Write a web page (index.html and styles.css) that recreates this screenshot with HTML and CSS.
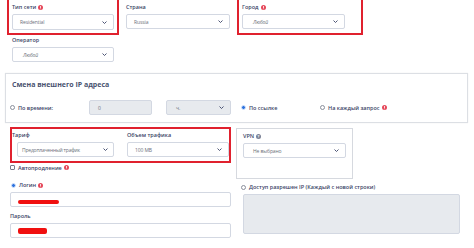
FILE: index.html
```html
<!DOCTYPE html>
<html>
<head>
    <link rel="stylesheet" href="styles.css">
    <title>Прокси</title>
</head>
<body>
<div class="top">
    <div class="group marked">
        <div class="label">Тип сети <svg class="warn" viewBox="0 0 10 10"><circle cx="5" cy="5" r="5"/><rect x="4.2" y="2" width="1.6" height="4"/><rect x="4.2" y="7" width="1.6" height="1.4"/></svg></div>
        <div class="select tall"><span>Residential</span><svg class="chev" viewBox="0 0 10 6"><path d="M1 1l4 4 4-4"/></svg></div>
    </div>
    <div class="group">
        <div class="label">Страна</div>
        <div class="select"><span>Russia</span><svg class="chev" viewBox="0 0 10 6"><path d="M1 1l4 4 4-4"/></svg></div>
    </div>
    <div class="group city">
        <div class="label">Город <svg class="warn" viewBox="0 0 10 10"><circle cx="5" cy="5" r="5"/><rect x="4.2" y="2" width="1.6" height="4"/><rect x="4.2" y="7" width="1.6" height="1.4"/></svg></div>
        <div class="select"><span class="any">Любой</span><svg class="chev" viewBox="0 0 10 6"><path d="M1 1l4 4 4-4"/></svg></div>
    </div>
</div>

<div class="group operator">
    <div class="label">Оператор</div>
    <div class="select"><span class="any">Любой</span><svg class="chev" viewBox="0 0 10 6"><path d="M1 1l4 4 4-4"/></svg></div>
</div>

<div class="ipbox">
    <div class="title">Смена внешнего IP адреса</div>
    <div class="iprow">
        <div class="opt time"><i class="radio"></i>По времени:</div>
        <div class="input off">0</div>
        <div class="select off unit"><span>ч.</span><svg class="chev" viewBox="0 0 10 6"><path d="M1 1l4 4 4-4"/></svg></div>
        <div class="opt link"><i class="radio on"></i>По ссылке</div>
        <div class="opt"><i class="radio"></i>На каждый запрос <svg class="warn" viewBox="0 0 10 10"><circle cx="5" cy="5" r="5"/><rect x="4.2" y="2" width="1.6" height="4"/><rect x="4.2" y="7" width="1.6" height="1.4"/></svg></div>
    </div>
</div>

<div class="bottom">
    <div class="left">
        <div class="tariff">
            <div class="group">
                <div class="label">Тариф</div>
                <div class="select indent"><span>Предоплаченный трафик</span><svg class="chev" viewBox="0 0 10 6"><path d="M1 1l4 4 4-4"/></svg></div>
            </div>
            <div class="group">
                <div class="label">Объем трафика</div>
                <div class="select"><span>100 MB</span><svg class="chev" viewBox="0 0 10 6"><path d="M1 1l4 4 4-4"/></svg></div>
            </div>
        </div>
        <div class="opt check"><i class="box"></i>Автопродление <svg class="warn" viewBox="0 0 10 10"><circle cx="5" cy="5" r="5"/><rect x="4.2" y="2" width="1.6" height="4"/><rect x="4.2" y="7" width="1.6" height="1.4"/></svg></div>
        <div class="opt login"><i class="radio on"></i>Логин <svg class="warn" viewBox="0 0 10 10"><circle cx="5" cy="5" r="5"/><rect x="4.2" y="2" width="1.6" height="4"/><rect x="4.2" y="7" width="1.6" height="1.4"/></svg></div>
        <div class="input wide"><i class="scrib s1"></i></div>
        <div class="label pass">Пароль</div>
        <div class="input wide"><i class="scrib s2"></i></div>
    </div>
    <div class="right">
        <div class="vpn">
            <div class="label">VPN <svg class="help" viewBox="0 0 10 10"><circle cx="5" cy="5" r="5"/><text x="5" y="8" text-anchor="middle">?</text></svg></div>
            <div class="select"><span>Не выбрано</span><svg class="chev" viewBox="0 0 10 6"><path d="M1 1l4 4 4-4"/></svg></div>
        </div>
        <div class="opt access"><i class="radio"></i>Доступ разрешен IP (Каждый с новой строки)</div>
        <div class="area"></div>
    </div>
</div>
</body>
</html>
```

FILE: styles.css
```css
body
{
    margin:0;
    background-color:white;
    font-family:"Open Sans", "Noto Sans", sans-serif;
    color:#3a4466;
    width:474px;
    height:248px;
    overflow:hidden;
}
.label
{
    font-size:5.5px;
    font-weight:600;
    line-height:8px;
    height:8px;
    display:flex;
    align-items:center;
    gap:2px;
    margin-bottom:3px;
}
.warn
{
    width:5px;
    height:5px;
    fill:#e5485a;
}
.warn rect
{
    fill:white;
}
.help
{
    width:5px;
    height:5px;
    fill:#7a8196;
}
.help text
{
    fill:white;
    font-size:8px;
    font-weight:bold;
}
.select,
.input
{
    box-sizing:border-box;
    height:15px;
    border:1px solid #d3d8e2;
    border-radius:2px;
    background-color:white;
    display:flex;
    align-items:center;
    justify-content:space-between;
    padding:0 6px 0 7px;
    font-size:5px;
    letter-spacing:-0.1px;
    color:#6b6f7a;
    white-space:nowrap;
}
.select.tall
{
    height:16px;
}
.chev
{
    width:5px;
    height:3px;
    flex-shrink:0;
    fill:none;
    stroke:#3a4466;
    stroke-width:1.8;
}
.any
{
    font-style:italic;
    padding-left:3px;
}

.top
{
    display:grid;
    grid-template-columns:102px 104px 103px;
    column-gap:12px;
    padding:3px 0 0 12px;
}
.marked
{
    outline:2px solid #e0212e;
    outline-offset:3px;
}
.city
{
    padding-right:13px;
    margin-right:-13px;
    outline:2px solid #e0212e;
    outline-offset:3px;
}
.operator
{
    margin:6px 0 0 12px;
    width:102px;
}

.ipbox
{
    box-sizing:border-box;
    margin:11px 0 0 5px;
    width:463px;
    height:50px;
    border:1px solid #dcdfe4;
    box-shadow:0 0 1px #e6e6e6;
    padding:6px 0 0 6px;
}
.title
{
    font-size:7px;
    font-weight:bold;
    line-height:9px;
    color:#4a5370;
}
.iprow
{
    display:flex;
    align-items:center;
    margin-top:11px;
}
.opt
{
    display:flex;
    align-items:center;
    font-size:5.5px;
    font-weight:600;
    gap:2px;
    height:8px;
}
.radio
{
    box-sizing:border-box;
    width:5px;
    height:5px;
    border:0.7px solid #8a8f9c;
    border-radius:50%;
    margin-right:1px;
}
.radio.on
{
    border:1.4px solid #d8e5fa;
    background-color:#2e73df;
}
.box
{
    box-sizing:border-box;
    width:5px;
    height:5px;
    border:0.7px solid #7a7f8c;
    border-radius:1px;
    margin-right:1px;
}
.time
{
    margin-left:-2px;
    width:79px;
}
.input.off,
.select.off
{
    background-color:#e7eaee;
}
.input.off
{
    width:63px;
    padding-left:8px;
}
.unit
{
    width:65px;
    margin-left:14px;
    padding-left:9px;
}
.link
{
    margin-left:10px;
    width:79px;
}

.bottom
{
    display:flex;
    margin-top:4px;
}
.left
{
    margin-left:10px;
    width:221px;
}
.tariff
{
    box-sizing:border-box;
    height:36px;
    border:2px solid #e0212e;
    display:grid;
    grid-template-columns:102px 102px;
    column-gap:13px;
    padding:2px 0 0 0;
}
.tariff .select.indent
{
    margin-left:5px;
    width:97px;
    padding-left:4px;
    padding-right:5px;
    letter-spacing:-0.2px;
}
.check
{
    height:9px;
}
.login
{
    margin-top:9px;
    padding-left:1px;
}
.input.wide
{
    width:221px;
    justify-content:flex-start;
    padding-left:7px;
    margin-top:3px;
}
.pass
{
    margin-top:5px;
    margin-bottom:0;
}
.scrib
{
    display:block;
    background-color:#f01010;
    border-radius:2px;
}
.s1
{
    width:41px;
    height:4px;
    margin-top:4px;
}
.s2
{
    width:29px;
    height:6px;
    margin-top:1px;
}
.right
{
    margin-left:5px;
    width:230px;
}
.vpn
{
    box-sizing:border-box;
    width:117px;
    height:51px;
    border:1px solid #d6d9df;
    padding:3px 0 0 6px;
    margin-top:1px;
}
.vpn .select
{
    width:103px;
    padding-left:9px;
}
.access
{
    margin:4px 0 0 5px;
}
.area
{
    box-sizing:border-box;
    margin:3px 0 0 7px;
    width:217px;
    height:40px;
    background-color:#e7eaee;
    border:1px solid #d3d8e2;
    border-radius:2px;
}
```
